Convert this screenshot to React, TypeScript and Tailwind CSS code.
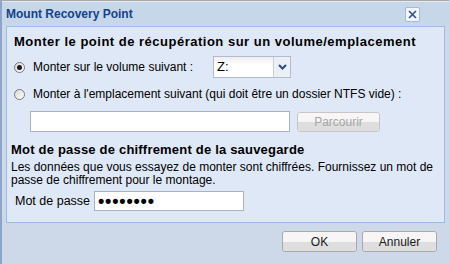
import React from 'react';

// Mount Recovery Point dialog (XP-style window)

const font = { fontFamily: '"Liberation Sans", Arial, sans-serif' };

function Radio({ checked }: { checked?: boolean }) {
  return (
    <span className="relative inline-flex h-[11px] w-[11px] shrink-0 items-center justify-center rounded-full border border-[#7a7a7a] bg-gradient-to-br from-[#d8d8d8] to-white">
      {checked && <span className="h-[5px] w-[5px] rounded-full bg-[#1a1a1a]" />}
    </span>
  );
}

function XpButton({ label, disabled, className }: { label: string; disabled?: boolean; className?: string }) {
  return (
    <button
      className={`relative flex flex-col overflow-hidden rounded-[3px] border text-[12px] leading-none ${
        disabled ? 'border-[#c6c6c6] text-[#a6a6a6]' : 'border-[#a9a9a9] text-[#1a1a1a]'
      } ${className ?? ''}`}
    >
      <span className="h-1/2 w-full bg-[#f7f5f6]" />
      <span className="h-1/2 w-full bg-[#dedede]" />
      <span className="absolute inset-0 flex items-center justify-center">{label}</span>
    </button>
  );
}

export default function App() {
  return (
    <div
      className="flex h-[264px] w-[449px] flex-col whitespace-nowrap border-l-2 border-t border-[#8ca6cb] border-t-[#a8a8a8] bg-[#cdd8e9] text-[#000]"
      style={font}
    >
      {/* title bar */}
      <div className="flex h-[24px] items-center justify-between border-t border-[#e6ebf2] bg-[#c6d7ea] pl-[4px] pr-[29px]">
        <span className="pt-[1px] text-[12px] font-bold text-[#15428b]">Mount Recovery Point</span>
        <span className="mt-[2px] flex h-[15px] w-[15px] items-center justify-center rounded-[2px] border border-[#9fb9df] bg-[#f3f7fc]">
          <svg width="9" height="9" viewBox="0 0 9 9">
            <path d="M1 1 L8 8 M8 1 L1 8" stroke="#2e4f95" strokeWidth="1.6" />
          </svg>
        </span>
      </div>

      {/* content panel */}
      <div className="ml-[4px] mr-[4px] mt-[1px] flex h-[197px] flex-col border border-[#99bbe8] bg-[#dfe8f6] pl-[7px]">
        <div className="mt-[7px] text-[13px] font-bold leading-[16px] tracking-[0.5px]">
          Monter le point de récupération sur un volume/emplacement
        </div>

        <div className="mt-[6px] flex h-[22px] items-center">
          <Radio checked />
          <span className="ml-[8px] w-[180px] text-[12px]">Monter sur le volume suivant :</span>
          <div className="flex h-[22px] w-[78px] border border-[#b3bbd0] bg-white">
            <span className="flex-1 bg-gradient-to-b from-[#eeeeee] to-white to-40% pl-[3px] text-[13px] leading-[20px]">Z:</span>
            <span className="flex w-[17px] items-center justify-center border-l border-[#c9cfdb] bg-[#eceff4]">
              <svg width="9" height="6" viewBox="0 0 9 6">
                <path d="M1 1 L4.5 4.5 L8 1" stroke="#2a4a8a" strokeWidth="2" fill="none" />
              </svg>
            </span>
          </div>
        </div>

        <div className="mt-[9px] flex h-[14px] items-center">
          <Radio />
          <span className="ml-[8px] text-[12px]">
            Monter à l'emplacement suivant (qui doit être un dossier NTFS vide) :
          </span>
        </div>

        <div className="mt-[10px] flex items-center pl-[16px]">
          <div className="h-[21px] w-[260px] border border-[#a9b1c2] bg-white" />
          <XpButton label="Parcourir" disabled className="ml-[7px] h-[20px] w-[83px] text-[11px]" />
        </div>

        <div className="-ml-[3px] mt-[10px] text-[13px] font-bold leading-[16px] tracking-[0.2px]">
          Mot de passe de chiffrement de la sauvegarde
        </div>
        <p className="-ml-[3px] mt-[3px] text-[12px] leading-[13px]">
          Les données que vous essayez de monter sont chiffrées. Fournissez un mot de
          <br />
          passe de chiffrement pour le montage.
        </p>

        <div className="mt-[4px] flex h-[20px] items-center">
          <span className="ml-[1px] w-[79px] text-[12.5px]">Mot de passe</span>
          <div className="flex h-[20px] w-[150px] items-center border border-[#a9b1c2] bg-white pl-[3px] text-[18px] font-bold leading-none tracking-[0.8px]">
            ••••••••
          </div>
        </div>
      </div>

      {/* footer buttons */}
      <div className="mt-[8px] flex justify-end gap-[5px] pr-[12px]">
        <XpButton label="OK" className="h-[21px] w-[75px]" />
        <XpButton label="Annuler" className="h-[21px] w-[75px]" />
      </div>
    </div>
  );
}
